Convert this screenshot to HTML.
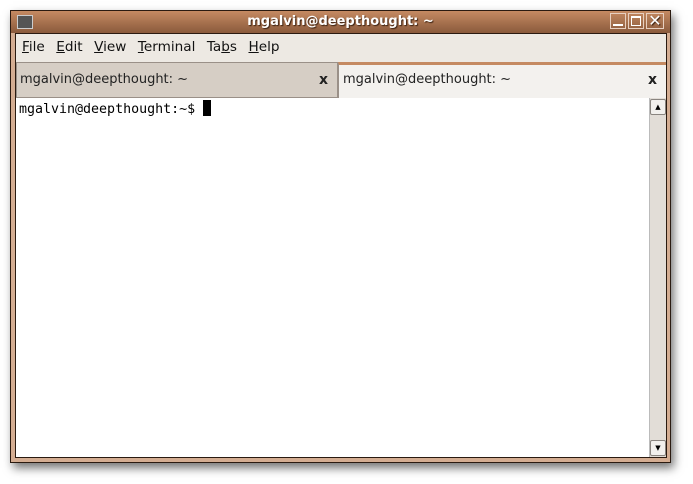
<!DOCTYPE html>
<html><head><style>
body{margin:0;width:693px;height:484px;background:#fff;position:relative;overflow:hidden;font-family:"DejaVu Sans","Liberation Sans",sans-serif}
.win{position:absolute;left:10px;top:10px;width:661px;height:453px;background:#d4ad92;border:1px solid #2a1a10;box-sizing:border-box;box-shadow:3px 5px 9px rgba(0,0,0,.55)}
.title{position:absolute;left:0;top:0;right:0;height:22px;background:linear-gradient(#c58a62,#8a5a3c);color:#fff;font-weight:bold;font-size:13px;text-align:center;line-height:21px;text-shadow:1px 1px 1px #3a2010}
.inner{position:absolute;left:4px;top:22px;right:3px;bottom:4px;background:#ede9e3;border:1px solid #2a1a10}
.menu{height:26px;font-size:13.6px;line-height:26px;color:#111;padding-left:6px}
.menu span{margin-right:11.5px}
.tab{position:absolute;top:28px;height:36px;font-size:13px;line-height:34px;color:#222;box-sizing:border-box}
.t1{left:0;width:322px;background:#d6cec5;border:1px solid #9a9088;padding-left:3px}
.t2{left:322px;right:0;background:#f3f1ee;border-top:3px solid #c58a62;line-height:30px;padding-left:4px;border-left:1px solid #9a9088}
.x{position:absolute;right:9px;font-weight:bold;font-size:14px}
.term{position:absolute;left:0;top:64px;right:16px;bottom:0;background:#fff;font-family:"DejaVu Sans Mono","Liberation Mono",monospace;font-size:13.3px;padding:2px 3px;line-height:16px}
.cur{display:inline-block;width:8px;height:16px;background:#000;vertical-align:-3px}
.sb{position:absolute;right:0;top:64px;width:16px;bottom:0;background:#e2ddd7;border-left:1px solid #bbb}
.btn{position:absolute;left:0;width:14px;height:14px;background:#f2f0ed;border:1px solid #8a8580;border-radius:2px;font-size:7px;text-align:center;line-height:14px}
</style></head><body>
<div class="win">
<div class="title">mgalvin@deepthought: ~
<div style="position:absolute;left:6px;top:4px;width:14px;height:12px;background:#555;border:1px solid #ccc"></div>
<div style="position:absolute;right:4px;top:2px;width:56px;height:17px;display:flex;gap:2px">
<div style="width:16px;height:16px;border:1px solid #e8d0c0;box-sizing:border-box;position:relative"><div style="position:absolute;left:2px;right:2px;bottom:2px;height:2px;background:#fff"></div></div>
<div style="width:16px;height:16px;border:1px solid #e8d0c0;box-sizing:border-box;position:relative"><div style="position:absolute;left:2px;right:2px;top:2px;bottom:2px;border:2px solid #fff;border-width:2px 1px 1px 1px"></div></div>
<div style="width:18px;height:16px;border:1px solid #e8d0c0;box-sizing:border-box;font-size:16px;line-height:14px;font-weight:normal">✕</div>
</div></div>
<div class="inner">
<div class="menu"><span><u>F</u>ile</span><span><u>E</u>dit</span><span><u>V</u>iew</span><span><u>T</u>erminal</span><span>Ta<u>b</u>s</span><span><u>H</u>elp</span></div>
<div class="tab t1">mgalvin@deepthought: ~<span class="x">x</span></div>
<div class="tab t2">mgalvin@deepthought: ~<span class="x">x</span></div>
<div class="term">mgalvin@deepthought:~$ <span class="cur"></span></div>
<div class="sb"><div class="btn" style="top:1px">▲</div><div class="btn" style="bottom:1px">▼</div></div>
</div></div>
</body></html>
